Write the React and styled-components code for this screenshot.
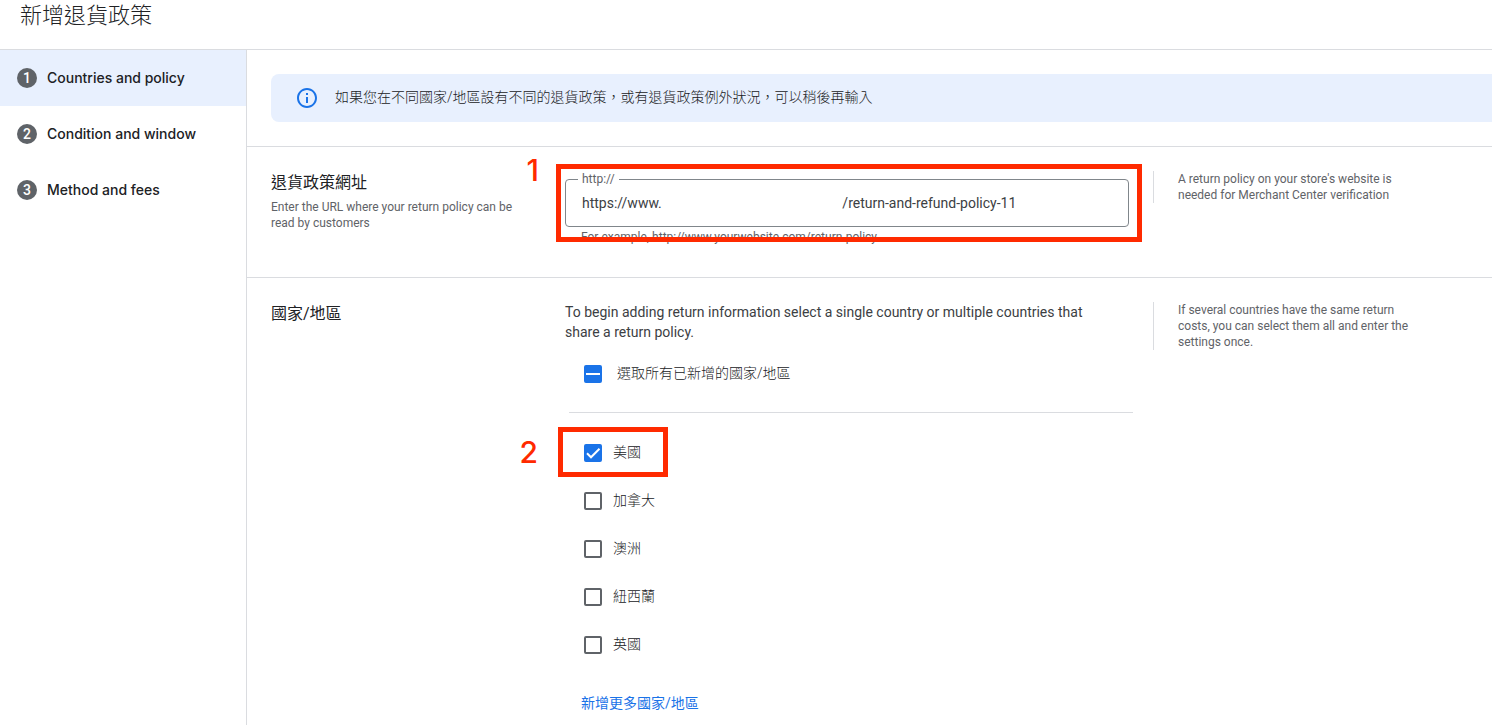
import React, { useState, useEffect, useRef } from 'react'
import styled, { createGlobalStyle } from 'styled-components'

const GlobalStyle = createGlobalStyle`
  * {
    box-sizing: border-box;
  }
  body {
    margin: 0;
    background: #fff;
    color: #3c4043;
    font-family: Roboto, "Noto Sans CJK TC", sans-serif;
    font-size: 14px;
    line-height: 20px;
  }
  h1, h2, p, ol, ul {
    margin: 0;
    padding: 0;
  }
`;

//page shell
const Page = styled.div`
  display: flex;
  flex-direction: column;
  min-height: 100vh;
`;

const Header = styled.header`
  height: 50px;
  padding: 0 20px;
  border-bottom: 1px solid #dadce0;

  h1 {
    color: #202124;
    font-size: 22px;
    font-weight: 300;
    line-height: 32px;
  }
`;

const Body = styled.div`
  display: flex;
  flex: 1;
`;

const Sidebar = styled.nav`
  flex: 0 0 247px;
  border-right: 1px solid #dadce0;

  ol {
    list-style: none;
  }
`;

const StepLink = styled.a`
  display: flex;
  align-items: center;
  gap: 10px;
  height: 56px;
  padding: 0 17px;
  background: ${({ $active }) => ($active ? '#e8f0fe' : 'transparent')};
  color: #202124;
  font-family: Inter, sans-serif;
  font-weight: 500;
  text-decoration: none;
`;

const StepNumber = styled.span`
  width: 20px;
  height: 20px;
  border-radius: 50%;
  background: #5f6368;
  color: #fff;
  font-family: Roboto, sans-serif;
  text-align: center;
`;

const Main = styled.main`
  flex: 1;
  min-width: 0;
`;

const BannerArea = styled.div`
  padding: 24px 0 24px 24px;
  border-bottom: 1px solid #dadce0;
`;

const Banner = styled.div`
  display: flex;
  align-items: center;
  gap: 16px;
  min-height: 48px;
  padding: 0 24px;
  border-radius: 8px 0 0 8px;
  background: #e8f0fe;
  color: #202124;
  font-weight: 300;

  svg {
    flex: none;
  }
  p {
    padding-bottom: 2px;
  }
`;

//one settings row: title, control, hint
const Section = styled.section`
  display: grid;
  grid-template-columns: 270px minmax(0, 564px) 272px;
  column-gap: 24px;
  align-items: start;
  padding: 24px 24px ${({ $last }) => ($last ? '12px' : '24px')};
  border-bottom: ${({ $last }) => ($last ? 'none' : '1px solid #dadce0')};
`;

const SectionTitle = styled.h2`
  color: #202124;
  font-size: 16px;
  font-weight: 400;
  line-height: 24px;
`;

const SmallText = styled.p`
  color: #5f6368;
  font-size: 12px;
  line-height: 16px;
`;

const Description = styled(SmallText)`
  margin-top: 4px;
  padding-right: 12px;
`;

const Intro = styled.p`
  padding-right: 16px;
`;

const Hint = styled(SmallText)`
  padding-left: 24px;
  border-left: 1px solid #dadce0;
`;

const FieldGroup = styled.div`
  position: relative;
  padding: 8px 0;
`;

const Field = styled.div`
  position: relative;

  label {
    position: absolute;
    top: -8px;
    left: 13px;
    padding: 0 4px;
    background: #fff;
    color: #5f6368;
    font-size: 12px;
    line-height: 16px;
  }
  input {
    display: block;
    width: 100%;
    height: 48px;
    padding: 0 16px;
    border: 1px solid #80868b;
    border-radius: 4px;
    background: #fff;
    color: #3c4043;
    font: inherit;
  }
`;

const Helper = styled(SmallText)`
  padding: 2px 16px 0;
`;

const CountryList = styled.div`
  margin: 8px -4px 0 4px;

  ul {
    list-style: none;
    padding-top: 16px;
    border-top: 1px solid #dadce0;
  }
`;

const SelectAll = styled.div`
  padding-bottom: 14px;
`;

const CheckRow = styled.label`
  position: relative;
  display: inline-flex;
  align-items: center;
  gap: ${({ $wide }) => ($wide ? '15px' : '11px')};
  height: 48px;
  padding: 0 27px 0 15px;
  color: #202124;
  font-weight: 300;
  vertical-align: top;
`;

const CheckLabel = styled.span`
  padding-bottom: 2px;
`;

const Box = styled.span`
  position: relative;
  display: flex;

  input {
    appearance: none;
    width: 18px;
    height: 18px;
    margin: 0;
    border: 2px solid #5f6368;
    border-radius: 2px;
  }
  input:checked,
  input:indeterminate {
    border-color: #1a73e8;
    background: #1a73e8;
  }
  svg {
    position: absolute;
    inset: 0;
    pointer-events: none;
  }
`;

const ListItem = styled.li`
  display: flex;
`;

const AddLink = styled.a`
  display: inline-block;
  margin: 24px 16px 0;
  color: #1a73e8;
  text-decoration: none;
`;

//red callouts drawn over the form
const Callout = styled.span`
  position: absolute;
  inset: ${({ $inset }) => $inset};
  border: 5px solid #ff2a00;
  pointer-events: none;
`;

const CalloutNumber = styled.span`
  position: absolute;
  top: ${({ $top }) => $top};
  right: calc(100% + ${({ $gap }) => $gap});
  color: #ff2a00;
  font-family: Inter, sans-serif;
  font-size: 30px;
  font-weight: 500;
  line-height: 32px;
`;

const steps = ['Countries and policy', 'Condition and window', 'Method and fees'];
const countries = ['美國', '加拿大', '澳洲', '紐西蘭', '英國'];
const policyUrl = 'https://www.' + '\u00a0'.repeat(52) + '/return-and-refund-policy-11';

const InfoIcon = () => (
  <svg width="24" height="24" viewBox="0 0 24 24" fill="#1a73e8" aria-hidden="true">
    <path d="M11 7h2v2h-2zm0 4h2v6h-2zm1-9C6.48 2 2 6.48 2 12s4.48 10 10 10 10-4.48 10-10S17.52 2 12 2zm0 18c-4.41 0-8-3.59-8-8s3.59-8 8-8 8 3.59 8 8-3.59 8-8 8z" />
  </svg>
);

const Checkbox = ({ label, checked, mixed = false, wide, onChange, children }) => {
  const ref = useRef(null);

  useEffect(() => {
    ref.current.indeterminate = mixed;
  }, [mixed]);

  return (
    <CheckRow $wide={wide}>
      <Box>
        <input ref={ref} type="checkbox" checked={checked} onChange={onChange} />
        {(checked || mixed) && (
          <svg width="18" height="18" viewBox="0 0 18 18" fill="none" stroke="#fff" strokeWidth="2" aria-hidden="true">
            <path d={mixed ? 'M2 9h14' : 'M3 9.3l4 4L15.5 4.8'} />
          </svg>
        )}
      </Box>
      <CheckLabel>{label}</CheckLabel>
      {children}
    </CheckRow>
  );
};

const App = () => {
  const [url, setUrl] = useState(policyUrl);
  const [selected, setSelected] = useState(['美國']);

  const allSelected = selected.length === countries.length;

  const toggle = (country) => {
    setSelected(
      selected.includes(country)
        ? selected.filter((c) => c !== country)
        : [...selected, country]
    );
  };

  return (
    <Page>
      <GlobalStyle />
      <Header>
        <h1>新增退貨政策</h1>
      </Header>
      <Body>
        <Sidebar>
          <ol>
            {steps.map((step, i) => (
              <li key={step}>
                <StepLink href={`#step-${i + 1}`} $active={i === 0}>
                  <StepNumber>{i + 1}</StepNumber>
                  {step}
                </StepLink>
              </li>
            ))}
          </ol>
        </Sidebar>

        <Main>
          <BannerArea>
            <Banner>
              <InfoIcon />
              <p>如果您在不同國家/地區設有不同的退貨政策，或有退貨政策例外狀況，可以稍後再輸入</p>
            </Banner>
          </BannerArea>

          <Section>
            <div>
              <SectionTitle>退貨政策網址</SectionTitle>
              <Description>Enter the URL where your return policy can be read by customers</Description>
            </div>
            <FieldGroup>
              <Field>
                <label htmlFor="policy-url">http://</label>
                <input
                  id="policy-url"
                  type="text"
                  value={url}
                  onChange={(e) => setUrl(e.target.value)}
                />
              </Field>
              <Helper>For example, http://www.yourwebsite.com/return-policy</Helper>
              <Callout $inset="-7px -13px 11px -9px" />
              <CalloutNumber $top="-17px" $gap="26px">1</CalloutNumber>
            </FieldGroup>
            <Hint>A return policy on your store's website is needed for Merchant Center verification</Hint>
          </Section>

          <Section $last>
            <SectionTitle>國家/地區</SectionTitle>
            <div>
              <Intro>
                To begin adding return information select a single country or multiple countries that share a return policy.
              </Intro>
              <CountryList>
                <SelectAll>
                  <Checkbox
                    label="選取所有已新增的國家/地區"
                    wide
                    checked={allSelected}
                    mixed={selected.length > 0 && !allSelected}
                    onChange={() => setSelected(allSelected ? [] : countries)}
                  />
                </SelectAll>
                <ul>
                  {countries.map((country, i) => (
                    <ListItem key={country}>
                      <Checkbox
                        label={country}
                        checked={selected.includes(country)}
                        onChange={() => toggle(country)}
                      >
                        {i === 0 && (
                          <>
                            <Callout $inset="-2px 0 0 -11px" />
                            <CalloutNumber $top="7px" $gap="31px">2</CalloutNumber>
                          </>
                        )}
                      </Checkbox>
                    </ListItem>
                  ))}
                </ul>
              </CountryList>
              <AddLink href="#add-countries">新增更多國家/地區</AddLink>
            </div>
            <Hint>If several countries have the same return costs, you can select them all and enter the settings once.</Hint>
          </Section>
        </Main>
      </Body>
    </Page>
  );
};

export default App;
